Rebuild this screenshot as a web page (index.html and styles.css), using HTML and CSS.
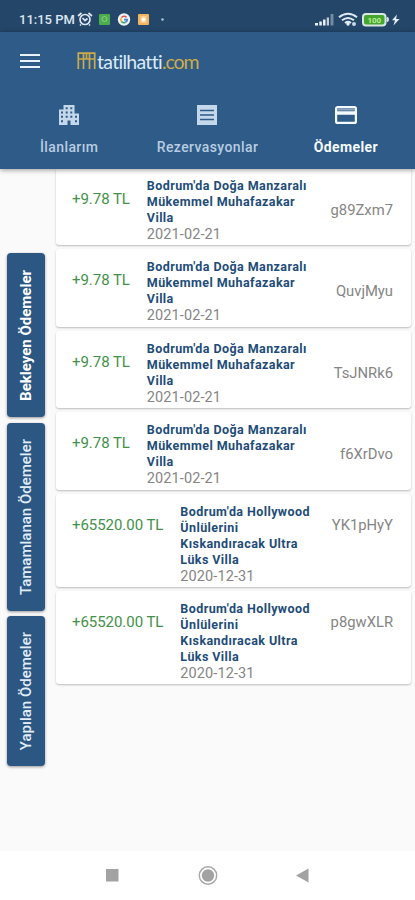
FILE: index.html
```
<!DOCTYPE html>
<html lang="tr">
<head>
<meta charset="utf-8">
<title>tatilhatti.com</title>
<link rel="stylesheet" href="styles.css">
</head>
<body>
<div class="status">
  <span class="clock">11:15 PM</span>
  <svg class="status-left" width="92" height="16" viewBox="0 0 92 16">
    <g fill="none" stroke="#dce7f2" stroke-width="1.7"><circle cx="8" cy="8.5" r="5"/><path d="M1 5L4.5 2M15 5L11.500 2M4 13.500L3 14.500M12 13.500L13 14.500M5.500 7L8 9.500L10.500 7.500"/></g>
    <rect x="22" y="3" width="11" height="11" rx="1" fill="#4bad4e"/><circle cx="27.500" cy="8" r="2.500" fill="none" stroke="#8bd07e"/>
    <circle cx="47" cy="8.500" r="6.200" fill="#eef3f6"/>
    <g fill="none" stroke-width="1.700"><path d="M44.500 6.500A3.300 3.300 0 0 1 49.500 6.300" stroke="#e0574c"/><path d="M44.300 7A3.300 3.300 0 0 0 44.500 10.500" stroke="#e6b23c"/><path d="M44.500 10.500A3.300 3.300 0 0 0 48.500 11.300" stroke="#48a463"/><path d="M47 8.700H50.200A3.300 3.300 0 0 1 48.500 11.300" stroke="#4b82cf"/></g>
    <rect x="61" y="3" width="11" height="11" rx="1" fill="#f3b461"/><path d="M63.500 5h6v7h-6z" fill="#f8cf8c"/><circle cx="66.500" cy="8.500" r="2" fill="#fff"/>
    <circle cx="85.500" cy="8.500" r="1.300" fill="#a9c3da"/>
  </svg>
  <svg class="status-right" width="88" height="16" viewBox="0 0 88 16">
    <g fill="#e9f1f8"><path d="M1 12h3v2.500H1zM5.300 10.500h2.500v4H5.300zM9 8.500h2.500v6H9z"/><path opacity=".8" d="M12.700 6.500h2.300v8h-2.300z"/><path opacity=".4" d="M16.500 3h3v11.500h-3z"/></g>
    <g fill="none" stroke="#dfe9f2" stroke-width="2"><path d="M25 6.200Q34 -.8 43 6.200M28 9.300Q34 4.700 40 9.300M31 12Q34 9.700 37 12"/></g><circle cx="34" cy="13" r="1.700" fill="#e9f1f8"/><circle cx="40" cy="13" r="2" fill="#c8d8e6"/>
    <rect x="49" y="3" width="22.500" height="11.500" rx="3" fill="#45a62f" stroke="#d8e6e6" stroke-width="2"/><path d="M73 6.500q2 2 0 4" stroke="#d8e6e6" stroke-width="2" fill="none"/>
    <text x="60.300" y="11.800" class="battery-text" text-anchor="middle">100</text>
    <path d="M83 3.500L78 9.200h3L79.500 14.500L85.500 8H82z" fill="#e8f0f8"/>
  </svg>
</div>
<header class="header">
  <div class="brand-row">
    <svg class="menu" width="20" height="16" viewBox="0 0 20 16"><path d="M0 2h20M0 8h20M0 14h20" stroke="#e8f2fc" stroke-width="2.200"/></svg>
    <svg class="mark" width="19" height="18" viewBox="0 0 19 18"><path d="M1.300 17V1.200H17.700V17M6.500 17V1.200M12.500 17V1.200M1.300 7H17.700M9.500 1v6" fill="none" stroke="#cdac48" stroke-width="1.700"/></svg>
    <span class="brand">tatilhatti<span class="brand-com">.com</span></span>
  </div>
  <nav class="tabs">
    <div class="tab">
      <svg width="20" height="20" viewBox="0 0 20 20"><path fill="#c5d7ea" fill-rule="evenodd" d="M0 4.500H4.500V0H15.500V8.500H20V20H11.500V15.500H8.500V20H0zM2 6.500v2h2v-2zM2 10.800v2h2v-2zM2 15.200v2h2v-2zM6.700 2.200v2h2v-2zM11.300 2.200v2h2v-2zM6.700 6.500v2h2v-2zM11.300 6.500v2h2v-2zM6.700 10.800v2h2v-2zM11.300 10.800v2h2v-2zM16 10.800v2h2v-2zM16 15.200v2h2v-2z"/></svg>
      <span class="label label-first">İlanlarım</span>
    </div>
    <div class="tab">
      <svg width="20" height="20" viewBox="0 0 20 20"><path fill="#c5d7ea" d="M0 0h20v20H0z"/><path d="M3 5.500h14M3 10h14M3 14.500h14" stroke="#2e5b87" stroke-width="1.700"/></svg>
      <span class="label label-mid">Rezervasyonlar</span>
    </div>
    <div class="tab active">
      <svg width="22" height="20" viewBox="0 0 22 20"><rect x="1.100" y="2.100" width="19.800" height="15.800" rx="1.500" fill="none" stroke="#f5faff" stroke-width="2.200"/><path d="M2 4.500h18" stroke="#8fa7c0" stroke-width="2.200"/><path d="M2 8h18" stroke="#f5faff" stroke-width="3.500"/></svg>
      <span class="label label-last">Ödemeler</span>
    </div>
  </nav>
</header>
<main class="content">
  <aside class="side">
    <div class="filter filter-a"><span>Bekleyen Ödemeler</span></div>
    <div class="filter filter-b"><span>Tamamlanan Ödemeler</span></div>
    <div class="filter filter-c"><span>Yapılan Ödemeler</span></div>
  </aside>
  <section class="list">
    <article class="card"><span class="amount">+9.78 TL</span><div class="info"><b>Bodrum'da Doğa Manzaralı<br>Mükemmel Muhafazakar<br>Villa</b><time>2021-02-21</time></div><span class="code">g89Zxm7</span></article>
    <article class="card"><span class="amount">+9.78 TL</span><div class="info"><b>Bodrum'da Doğa Manzaralı<br>Mükemmel Muhafazakar<br>Villa</b><time>2021-02-21</time></div><span class="code">QuvjMyu</span></article>
    <article class="card"><span class="amount">+9.78 TL</span><div class="info"><b>Bodrum'da Doğa Manzaralı<br>Mükemmel Muhafazakar<br>Villa</b><time>2021-02-21</time></div><span class="code">TsJNRk6</span></article>
    <article class="card"><span class="amount">+9.78 TL</span><div class="info"><b>Bodrum'da Doğa Manzaralı<br>Mükemmel Muhafazakar<br>Villa</b><time>2021-02-21</time></div><span class="code">f6XrDvo</span></article>
    <article class="card tall"><span class="amount">+65520.00 TL</span><div class="info"><b>Bodrum'da Hollywood<br>Ünlülerini<br>Kıskandıracak Ultra<br>Lüks Villa</b><time>2020-12-31</time></div><span class="code">YK1pHyY</span></article>
    <article class="card tall"><span class="amount">+65520.00 TL</span><div class="info"><b>Bodrum'da Hollywood<br>Ünlülerini<br>Kıskandıracak Ultra<br>Lüks Villa</b><time>2020-12-31</time></div><span class="code">p8gwXLR</span></article>
  </section>
</main>
<footer class="navbar">
  <svg width="20" height="20" viewBox="0 0 20 20"><path d="M4 3h12.500v12.500H4z" fill="#a2a2a2"/></svg>
  <svg width="20" height="20" viewBox="0 0 20 20"><circle cx="10" cy="9.500" r="8.700" fill="none" stroke="#a9a9a9" stroke-width="1.500"/><circle cx="10" cy="9.500" r="6.200" fill="#a2a2a2"/></svg>
  <svg width="20" height="20" viewBox="0 0 20 20"><path d="M3 9.500L15.500 2.500v14z" fill="#a2a2a2"/></svg>
</footer>
</body>
</html>
```
FILE: styles.css
```
* { box-sizing: border-box; }
body { margin: 0; width: 415px; height: 900px; overflow: hidden; background: #fafafa; font-family: Roboto, "Liberation Sans", sans-serif; display: flex; flex-direction: column; }
svg { display: block; flex: none; }
.status { height: 32px; flex: none; background: #234669; display: flex; align-items: flex-start; padding: 11px 13px 0 19px; color: #dce7f2; }
.clock { width: 58px; font-size: 13px; line-height: 17px; font-weight: 500; letter-spacing: 0; white-space: nowrap; }
.status-right { margin-left: auto; }
.battery-text { font-size: 8px; font-weight: 700; fill: #bdec9b; }
.header { height: 137px; flex: none; background: #2e5b87; box-shadow: 0 1px 5px rgba(0,0,0,.4); position: relative; z-index: 1; }
.brand-row { height: 58px; display: flex; align-items: center; padding-left: 20px; }
.mark { margin-left: 37px; }
.brand { font-family: Lato, sans-serif; font-size: 19.500px; line-height: 24px; letter-spacing: -.7px; color: #dceafa; margin: 1px 0 0 1px; }
.brand-com { color: #cdac48; letter-spacing: -1.100px; }
.tabs { display: grid; grid-template-columns: 1fr 1fr 1fr; padding-top: 15px; }
.tab { display: flex; flex-direction: column; align-items: center; color: #b8cde2; }
.label { margin-top: 13px; font-size: 14px; line-height: 18px; font-weight: 500; letter-spacing: .4px; white-space: nowrap; }
.active { color: #f5faff; }
.active .label { font-weight: 700; }
.content { flex: 1; min-height: 0; display: flex; }
.side { width: 56px; padding: 84px 0 0 7px; display: flex; flex-direction: column; gap: 5.500px; }
.filter { width: 38px; flex: none; border-radius: 4px; background: #2b5782; box-shadow: 0 1px 3px rgba(0,0,0,.4); display: flex; align-items: center; justify-content: center; color: #e1edf8; font-size: 15px; font-weight: 500; }
.filter span { writing-mode: vertical-rl; transform: rotate(180deg); white-space: nowrap; line-height: 18px; }
.filter-a { height: 164px; color: #fff; font-weight: 700; }
.filter-b { height: 188px; }
.filter-c { height: 150px; }
.list { width: 355px; padding-top: 0; display: flex; flex-direction: column; gap: 4px; margin-top: -1px; }
.card { height: 77.400px; flex: none; display: flex; background: #fff; border-radius: 3px; box-shadow: 0 1px 2px rgba(0,0,0,.25); padding: 10px 18px 0 16px; }
.tall { height: 93.400px; }
.amount { font-size: 15px; line-height: 18px; color: #439149; margin: 12px 17px 0 0; letter-spacing: -.05px; white-space: nowrap; }
.info b { display: block; color: #224c78; font-size: 12.500px; line-height: 16px; font-weight: 700; white-space: nowrap; letter-spacing: .42px; }
.info time { display: block; color: #858585; font-size: 14.500px; line-height: 17px; letter-spacing: .1px; }
.code { margin: 23px 0 0 auto; color: #858585; font-size: 14.800px; line-height: 18px; letter-spacing: 0; }
.tall .code { margin-top: 12px; }
.navbar { height: 49px; flex: none; background: #fff; display: flex; justify-content: space-between; padding: 15px 102px 0 102px; }
```
